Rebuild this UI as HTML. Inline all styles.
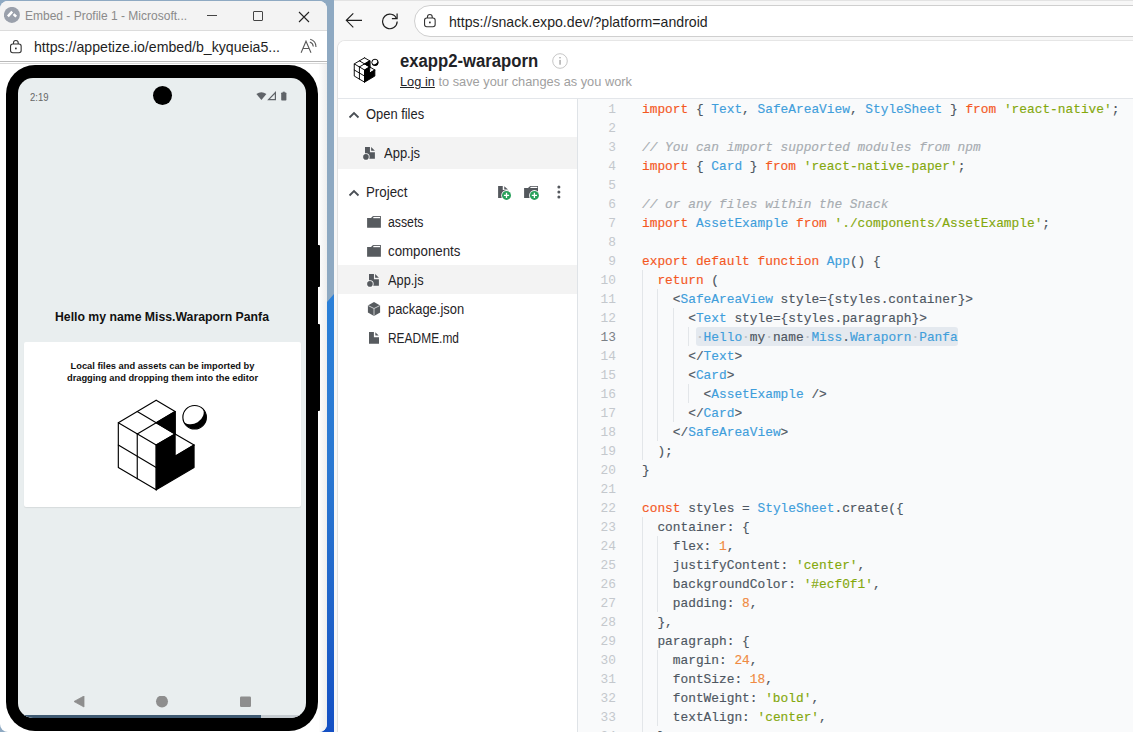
<!DOCTYPE html>
<html><head><meta charset="utf-8">
<style>
*{box-sizing:border-box;margin:0;padding:0}
html,body{width:1133px;height:732px;overflow:hidden;background:#f7f7f7;font-family:"Liberation Sans",sans-serif;position:relative}
.abs{position:absolute}
/* desktop strip */
#desk{left:0;top:0;width:337px;height:732px;background:#8ea9c2}
#deskblue{left:327px;top:294px;width:7px;height:438px;background:linear-gradient(#2b80d8,#2a78d2 40%,#1f62c9 75%,#1450c4);clip-path:polygon(0 8px,100% 0,100% 100%,0 100%)}
/* left window */
#lw{left:0;top:1px;width:327px;height:731px;background:#fff;border-radius:8px 8px 8px 8px;overflow:hidden}
#lwtitle{left:0;top:0;width:327px;height:30px;background:#f3f3f3}
#lwaddr{left:0;top:29px;width:327px;height:32px;background:#fff;border-bottom:1px solid #b9b9b9;border-top:1px solid #dcdcdc}
/* main browser */
#mb{left:334px;top:0;width:799px;height:732px;background:#f7f7f7}
#mbtop{left:334px;top:0;width:799px;height:1px;background:#e3e3e3}
#pill{left:414px;top:5px;width:740px;height:32px;border:1px solid #cfcfcf;border-radius:16px;background:#fff}
#card{left:337px;top:40px;width:800px;height:700px;background:#fff;border-top-left-radius:8px;border-left:1px solid #e2e2e2;border-top:1px solid #e6e6e6;overflow:hidden}
#lwtt{left:25px;top:8px;font-size:12px;color:#8a8a8a;white-space:nowrap}
#lwurl{left:34px;top:7.5px;font-size:14.15px;color:#1f1f1f;white-space:nowrap}
#lwaa{left:301px;top:6px;font-size:15px;color:#555}
#phone{left:0;top:0;width:327px;height:731px}
#pframe{left:6.2px;top:63.7px;width:311.7px;height:666px;background:#000;border-radius:29px}
#screen{left:18px;top:77px;width:288px;height:640px;background:#e9eeef;border-radius:15px;overflow:hidden}
#hello{left:0;top:232px;width:288px;text-align:center;font-size:12.25px;font-weight:bold;color:#111}
#pcard{left:6px;top:264px;width:277px;height:165px;background:#fff;border-radius:2px;box-shadow:0 1px 1px rgba(0,0,0,0.08)}
#pctext{left:0;top:19px;width:277px;text-align:center;font-size:9.3px;font-weight:bold;color:#111;line-height:11.5px}
#url{left:34px;top:7.5px;font-size:14.14px;color:#1f1f1f;white-space:nowrap}
#hdr{left:0;top:0;width:800px;height:58px;border-bottom:1px solid #e3e6ea;background:#fff}
#ttl{left:62px;top:10px;font-size:18px;font-weight:bold;color:#1f2327;white-space:nowrap;transform:scaleX(0.927);transform-origin:0 0}
#sub{left:62px;top:33px;font-size:13.5px;color:#a0a0a0;white-space:nowrap;transform:scaleX(0.948);transform-origin:0 0}
#side{left:0;top:58px;width:240px;height:640px;border-right:1px solid #dfe3e7;background:#fff}
.st{font-size:14px;color:#1f2327;white-space:nowrap;transform-origin:0 0}
#ed{left:240px;top:58px;width:560px;height:640px;background:#f9fafb}
#gut{left:0;top:1px;width:38px;text-align:right;font-family:"Liberation Mono",monospace;font-size:12.83px;line-height:19px;color:#c4c8cd}
#gut .act{color:#7b8086}
#code{left:64px;top:1px;-webkit-text-stroke:0.15px currentColor;font-family:"Liberation Mono",monospace;font-size:12.83px;line-height:19px;color:#4d5661;white-space:pre}
.guide{width:1px;background:#e3e6e9}
.k{color:#f4581f}.b{color:#3f9edb}.s{color:#84a80c}.n{color:#f08a42}.c{color:#a7acb1;font-style:italic}
.hl{}
.ws{color:#b8bec5}
</style></head>
<body>
<div id="desk" class="abs"></div>
<div id="deskblue" class="abs"></div>
<div class="abs" style="left:316px;top:716px;width:12px;height:16px;background:#1450c4"></div>
<div id="lw" class="abs">
  <div id="lwtitle" class="abs">
    <svg class="abs" style="left:4px;top:6px" width="17" height="17" viewBox="0 0 17 17"><circle cx="7.9" cy="7.9" r="8" fill="#9aa0ab"/><path d="M3.9 9.3L8.2 4.6M9.6 7.2L12.2 9.7" stroke="#fff" stroke-width="2.5"/></svg>
    <div class="abs" id="lwtt">Embed - Profile 1 - Microsoft...</div>
    <div class="abs" style="left:207px;top:14px;width:10px;height:1px;background:#444"></div>
    <div class="abs" style="left:253px;top:10px;width:10px;height:10px;border:1px solid #444;border-radius:1px"></div>
    <svg class="abs" style="left:298px;top:10px" width="12" height="12" viewBox="0 0 12 12"><path d="M1 1L11 11M11 1L1 11" stroke="#222" stroke-width="1.1"/></svg>
  </div>
<div class="abs" style="left:319px;top:62px;width:8px;height:669px;background:linear-gradient(to right,#fdfdfd,#eeeeee)"></div>
<div id="phone" class="abs">
  <div class="abs" style="left:316px;top:244px;width:3.5px;height:42px;background:#000;border-radius:0 1px 1px 0"></div>
  <div class="abs" style="left:316px;top:323px;width:3.5px;height:87px;background:#000;border-radius:0 1px 1px 0"></div>
  <div id="pframe" class="abs"></div>
  <div id="screen" class="abs">
    <div class="abs" style="left:11.6px;top:13.6px;font-size:10.2px;color:#666;transform:scaleX(0.93);transform-origin:0 0">2:19</div>
    <div class="abs" style="left:134.8px;top:8.2px;width:19px;height:19px;border-radius:50%;background:#000"></div>
    <svg class="abs" style="left:236px;top:13px" width="36" height="11" viewBox="0 0 36 11"><path d="M2.4 2.9Q7.4 -0.6 12.4 2.9L7.4 9.1Z" fill="#5f6368"/><path d="M21.4 1.6V8.6H14.6Z" fill="none" stroke="#5f6368" stroke-width="1.2" stroke-linejoin="miter"/><rect x="27.2" y="1.6" width="5.2" height="7.8" rx="0.7" fill="#5f6368"/><rect x="28.8" y="0.7" width="2" height="1.2" fill="#5f6368"/></svg>
    <div class="abs" id="hello">Hello my name Miss.Waraporn Panfa</div>
    <div id="pcard" class="abs">
      <div class="abs" id="pctext">Local files and assets can be imported by<br>dragging and dropping them into the editor</div>
      <svg class="abs" style="left:86px;top:48px" width="105" height="105" viewBox="0 0 732 732"><g fill="none" stroke="#000" stroke-width="8" stroke-linejoin="round" stroke-linecap="round"><polygon points="454,150 322,228 454,306" fill="#000"/><polygon points="454,306 322,384 322,696 586,540 586,384 454,462" fill="#000"/><polyline points="322,72 454,150 454,306"/><polyline points="322,72 58,228 58,540 322,696"/><polyline points="190,150 322,228 190,306"/><polyline points="454,150 322,228"/><polyline points="58,228 322,384 454,306 322,228"/><polyline points="190,306 190,618"/><polyline points="322,384 322,696"/><polyline points="58,384 322,540"/><polyline points="454,462 586,384"/><polyline points="454,306 586,384"/></g><circle cx="590" cy="190" r="82" fill="#000"/><ellipse cx="578" cy="172" rx="80" ry="62" transform="rotate(-32 578 172)" fill="#fff"/><circle cx="590" cy="190" r="82" fill="none" stroke="#000" stroke-width="8"/></svg>
    </div>
    <svg class="abs" style="left:56px;top:618px" width="180" height="14" viewBox="0 0 180 14"><path d="M0 5.5 L10 0 L10 11 Z" fill="#8e8e8e" stroke="#8e8e8e" stroke-width="0.8" stroke-linejoin="round"/><circle cx="88" cy="5.5" r="6" fill="#8e8e8e"/><rect x="166" y="0.5" width="11" height="10.5" rx="1.2" fill="#8e8e8e"/></svg>
    <div class="abs" style="left:0;top:637px;width:288px;height:3px;background:#c5cbd0"></div><div class="abs" style="left:0;top:637px;width:243px;height:3px;background:#3f5a72"></div>
  </div>
</div>
  <div class="abs" style="left:0;top:62px;width:327px;height:1px;background:#d9d9d9"></div>
  <div id="lwaddr" class="abs">
    <svg class="abs" style="left:9.1px;top:7.5px" width="14" height="15" viewBox="0 0 14 15"><rect x="1.55" y="5.05" width="10.6" height="8.7" rx="2.2" fill="none" stroke="#333" stroke-width="1.1"/><path d="M4.45 5.05V3.9A2.4 2.4 0 0 1 9.25 3.9V5.05" fill="none" stroke="#333" stroke-width="1.1"/><rect x="6" y="8.6" width="1.7" height="1.7" fill="#333"/></svg>
    <div class="abs" id="lwurl">https://appetize.io/embed/b_kyqueia5...</div>
    <svg class="abs" style="left:299px;top:6px" width="20" height="18" viewBox="0 0 20 18"><path d="M2.1 15.8L7 4.2L12 15.8M4.1 11.5H9.9" fill="none" stroke="#5a5a5a" stroke-width="1.1"/><path d="M11.2 2.3A8 8 0 0 1 17 10M10.8 5A5.3 5.3 0 0 1 14.3 9.5" fill="none" stroke="#5a5a5a" stroke-width="1.1"/></svg>
  </div>
</div>
<div id="mb" class="abs"></div>
<div id="mbtop" class="abs"></div>
<svg class="abs" style="left:344px;top:11px" width="20" height="19" viewBox="0 0 20 19"><path d="M18 9.3H2.6M9.3 2.3L2.3 9.3L9.3 16.3" fill="none" stroke="#1f1f1f" stroke-width="1.15"/></svg>
<svg class="abs" style="left:380px;top:11px" width="20" height="19" viewBox="0 0 20 19"><path d="M16.6 7.5A7.3 7.3 0 1 0 17.2 10.6" fill="none" stroke="#1f1f1f" stroke-width="1.2"/><path d="M17.1 2.5V7.7H11.9" fill="none" stroke="#1f1f1f" stroke-width="1.2"/></svg>
<div id="pill" class="abs">
  <svg class="abs" style="left:8.2px;top:6.5px" width="14" height="15" viewBox="0 0 14 15"><rect x="1.55" y="5.05" width="10.6" height="8.7" rx="2.2" fill="none" stroke="#333" stroke-width="1.1"/><path d="M4.45 5.05V3.9A2.4 2.4 0 0 1 9.25 3.9V5.05" fill="none" stroke="#333" stroke-width="1.1"/><rect x="6" y="8.6" width="1.7" height="1.7" fill="#333"/></svg>
  <div class="abs" id="url">https://snack.expo.dev/?platform=android</div>
</div>
<div id="card" class="abs">
  <div id="hdr" class="abs">
    <svg class="abs" id="logo" style="left:14px;top:14px" width="28.55" height="28.55" viewBox="0 0 732 732"><g fill="none" stroke="#000" stroke-width="24" stroke-linejoin="round" stroke-linecap="round"><polygon points="454,150 322,228 454,306" fill="#000"/><polygon points="454,306 322,384 322,696 586,540 586,384 454,462" fill="#000"/><polyline points="322,72 454,150 454,306"/><polyline points="322,72 58,228 58,540 322,696"/><polyline points="190,150 322,228 190,306"/><polyline points="454,150 322,228"/><polyline points="58,228 322,384 454,306 322,228"/><polyline points="190,306 190,618"/><polyline points="322,384 322,696"/><polyline points="58,384 322,540"/><polyline points="454,462 586,384"/><polyline points="454,306 586,384"/></g><circle cx="590" cy="190" r="82" fill="#000"/><ellipse cx="578" cy="172" rx="80" ry="62" transform="rotate(-32 578 172)" fill="#fff"/><circle cx="590" cy="190" r="82" fill="none" stroke="#000" stroke-width="24"/></svg>
    <div class="abs" id="ttl">exapp2-waraporn</div>
    <svg class="abs" style="left:214px;top:12px" width="16" height="16" viewBox="0 0 16 16"><circle cx="8" cy="8" r="7.3" fill="none" stroke="#c6c6c6" stroke-width="1"/><rect x="7.4" y="6.9" width="1.3" height="4.8" fill="#a0a0a0"/><circle cx="8" cy="4.8" r="0.8" fill="#a0a0a0"/></svg>
    <div class="abs" id="sub"><span style="text-decoration:underline;color:#1f2327">Log in</span> to save your changes as you work</div>
  </div>
  <div id="side" class="abs">
    <svg class="abs chev" style="left:10px;top:12px" width="12" height="8" viewBox="0 0 12 8"><path d="M1.5 6.5L6 2L10.5 6.5" fill="none" stroke="#4a4f55" stroke-width="1.8"/></svg>
    <div class="abs st" style="left:28px;top:7px;transform:scaleX(0.922)">Open files</div>
    <div class="abs" style="left:0;top:38px;width:239px;height:32px;background:#f3f3f3"></div>
    <svg class="abs" style="left:25px;top:47px" width="14" height="15" viewBox="0 0 14 15"><path d="M2 1H6.95V6.2H11.9V12.7H2Z" fill="#54585d"/><path d="M8.15 1L11.9 4.8H8.15Z" fill="#54585d"/><circle cx="2.94" cy="10.9" r="3.7" fill="#fff"/><circle cx="2.94" cy="10.9" r="2.82" fill="#54585d"/></svg>
    <div class="abs st" style="left:46px;top:46px;transform:scaleX(0.928)">App.js</div>
    <svg class="abs chev" style="left:10px;top:90px" width="12" height="8" viewBox="0 0 12 8"><path d="M1.5 6.5L6 2L10.5 6.5" fill="none" stroke="#4a4f55" stroke-width="1.8"/></svg>
    <div class="abs st" style="left:28px;top:85px;transform:scaleX(0.95)">Project</div>
    <svg class="abs" style="left:159px;top:86px" width="16" height="16" viewBox="0 0 16 16"><path d="M1.1 1.1H5.75V5H11.4V12.9H1.1Z" fill="#54585d"/><path d="M7.25 1.2L11 4.6H7.25Z" fill="#54585d"/><circle cx="9.5" cy="10.4" r="5.3" fill="#fff"/><circle cx="9.5" cy="10.4" r="4.5" fill="#27a05a"/><path d="M9.5 7.8V13M6.9 10.4H12.1" stroke="#fff" stroke-width="1.3"/></svg>
    <svg class="abs" style="left:185px;top:86px" width="17" height="16" viewBox="0 0 17 16"><path d="M1.1 3.1H5L7.2 1.1H15V13H1.1Z" fill="#54585d"/><rect x="7.4" y="1.8" width="6.9" height="1.2" fill="#fff"/><circle cx="11.4" cy="10.4" r="5.3" fill="#fff"/><circle cx="11.4" cy="10.4" r="4.5" fill="#27a05a"/><path d="M11.4 7.8V13M8.8 10.4H14" stroke="#fff" stroke-width="1.3"/></svg>
    <svg class="abs" style="left:217px;top:85px" width="8" height="16" viewBox="0 0 8 16"><circle cx="3.9" cy="2.9" r="1.5" fill="#54585d"/><circle cx="3.9" cy="8.1" r="1.5" fill="#54585d"/><circle cx="3.9" cy="13.1" r="1.5" fill="#54585d"/></svg>
    <svg class="abs" style="left:28px;top:116px" width="16" height="14" viewBox="0 0 16 14"><path d="M1.1 3.1H5L7 1H14.9V12.7H1.1Z" fill="#575b5f"/><rect x="7.3" y="1.9" width="6.7" height="1.3" fill="#fff"/></svg>
    <div class="abs st" style="left:50px;top:115px;transform:scaleX(0.877)">assets</div>
    <svg class="abs" style="left:28px;top:145px" width="16" height="14" viewBox="0 0 16 14"><path d="M1.1 3.1H5L7 1H14.9V12.7H1.1Z" fill="#575b5f"/><rect x="7.3" y="1.9" width="6.7" height="1.3" fill="#fff"/></svg>
    <div class="abs st" style="left:50px;top:144px;transform:scaleX(0.949)">components</div>
    <div class="abs" style="left:0;top:166px;width:239px;height:29px;background:#f3f3f3"></div>
    <svg class="abs" style="left:29px;top:174px" width="14" height="15" viewBox="0 0 14 15"><path d="M2 1H6.95V6.2H11.9V12.7H2Z" fill="#54585d"/><path d="M8.15 1L11.9 4.8H8.15Z" fill="#54585d"/><circle cx="2.94" cy="10.9" r="3.7" fill="#fff"/><circle cx="2.94" cy="10.9" r="2.82" fill="#54585d"/></svg>
    <div class="abs st" style="left:50px;top:173px;transform:scaleX(0.913)">App.js</div>
    <svg class="abs" style="left:29px;top:202px" width="14" height="16" viewBox="0 0 14 16"><path d="M7 1L13.1 4.4V11.6L7 15L0.9 11.6V4.4Z" fill="#575b5f"/><path d="M1.2 4.6L7 7.5L12.8 4.6M7 7.5V14.8" fill="none" stroke="#c9cbcd" stroke-width="1"/></svg>
    <div class="abs st" style="left:50px;top:202px;transform:scaleX(0.922)">package.json</div>
    <svg class="abs" style="left:30px;top:232px" width="12" height="14" viewBox="0 0 12 14"><path d="M1 1H5.9V6.3H11V12.8H1Z" fill="#575b5f"/><path d="M7.3 1.2L10.7 4.6H7.3Z" fill="#575b5f"/></svg>
    <div class="abs st" style="left:50px;top:231px;transform:scaleX(0.853)">README.md</div>
  </div>
  <div id="ed" class="abs"><div id="gut" class="abs"><div class="gn">1</div><div class="gn">2</div><div class="gn">3</div><div class="gn">4</div><div class="gn">5</div><div class="gn">6</div><div class="gn">7</div><div class="gn">8</div><div class="gn">9</div><div class="gn">10</div><div class="gn">11</div><div class="gn">12</div><div class="gn act">13</div><div class="gn">14</div><div class="gn">15</div><div class="gn">16</div><div class="gn">17</div><div class="gn">18</div><div class="gn">19</div><div class="gn">20</div><div class="gn">21</div><div class="gn">22</div><div class="gn">23</div><div class="gn">24</div><div class="gn">25</div><div class="gn">26</div><div class="gn">27</div><div class="gn">28</div><div class="gn">29</div><div class="gn">30</div><div class="gn">31</div><div class="gn">32</div><div class="gn">33</div><div class="gn">34</div><div class="gn">35</div></div><div class="abs guide" style="left:64.0px;top:171px;height:190px"></div><div class="abs guide" style="left:79.4px;top:190px;height:152px"></div><div class="abs guide" style="left:94.8px;top:209px;height:114px"></div><div class="abs guide" style="left:110.2px;top:228px;height:19px"></div><div class="abs guide" style="left:110.2px;top:285px;height:19px"></div><div class="abs guide" style="left:64.0px;top:418px;height:247px"></div><div class="abs guide" style="left:79.4px;top:437px;height:76px"></div><div class="abs guide" style="left:79.4px;top:551px;height:76px"></div><div class="abs" style="left:118.2px;top:228px;width:261.5px;height:18.6px;background:#e4e9ef;border-radius:3px"></div><div id="code" class="abs"><div class="ln"><span class="k">import</span> { <span class="b">Text</span>, <span class="b">SafeAreaView</span>, <span class="b">StyleSheet</span> } <span class="k">from</span> <span class="s">'react-native'</span>;</div><div class="ln">&#8203;</div><div class="ln"><span class="c">// You can import supported modules from npm</span></div><div class="ln"><span class="k">import</span> { <span class="b">Card</span> } <span class="k">from</span> <span class="s">'react-native-paper'</span>;</div><div class="ln">&#8203;</div><div class="ln"><span class="c">// or any files within the Snack</span></div><div class="ln"><span class="k">import</span> <span class="b">AssetExample</span> <span class="k">from</span> <span class="s">'./components/AssetExample'</span>;</div><div class="ln">&#8203;</div><div class="ln"><span class="k">export</span> <span class="k">default</span> <span class="k">function</span> <span class="b">App</span>() {</div><div class="ln">  <span class="k">return</span> (</div><div class="ln">    &lt;<span class="b">SafeAreaView</span> style={styles.container}&gt;</div><div class="ln">      &lt;<span class="b">Text</span> style={styles.paragraph}&gt;</div><div class="ln">       <span class="hl"><span class="ws">·</span><span class="b">Hello</span><span class="ws">·</span>my<span class="ws">·</span>name<span class="ws">·</span><span class="b">Miss</span>.<span class="b">Waraporn</span><span class="ws">·</span><span class="b">Panfa</span></span></div><div class="ln">      &lt;/<span class="b">Text</span>&gt;</div><div class="ln">      &lt;<span class="b">Card</span>&gt;</div><div class="ln">        &lt;<span class="b">AssetExample</span> /&gt;</div><div class="ln">      &lt;/<span class="b">Card</span>&gt;</div><div class="ln">    &lt;/<span class="b">SafeAreaView</span>&gt;</div><div class="ln">  );</div><div class="ln">}</div><div class="ln">&#8203;</div><div class="ln"><span class="k">const</span> styles = <span class="b">StyleSheet</span>.create({</div><div class="ln">  container: {</div><div class="ln">    flex: <span class="n">1</span>,</div><div class="ln">    justifyContent: <span class="s">'center'</span>,</div><div class="ln">    backgroundColor: <span class="s">'#ecf0f1'</span>,</div><div class="ln">    padding: <span class="n">8</span>,</div><div class="ln">  },</div><div class="ln">  paragraph: {</div><div class="ln">    margin: <span class="n">24</span>,</div><div class="ln">    fontSize: <span class="n">18</span>,</div><div class="ln">    fontWeight: <span class="s">'bold'</span>,</div><div class="ln">    textAlign: <span class="s">'center'</span>,</div><div class="ln">  },</div><div class="ln">});</div></div></div>
</div>
</body></html>
